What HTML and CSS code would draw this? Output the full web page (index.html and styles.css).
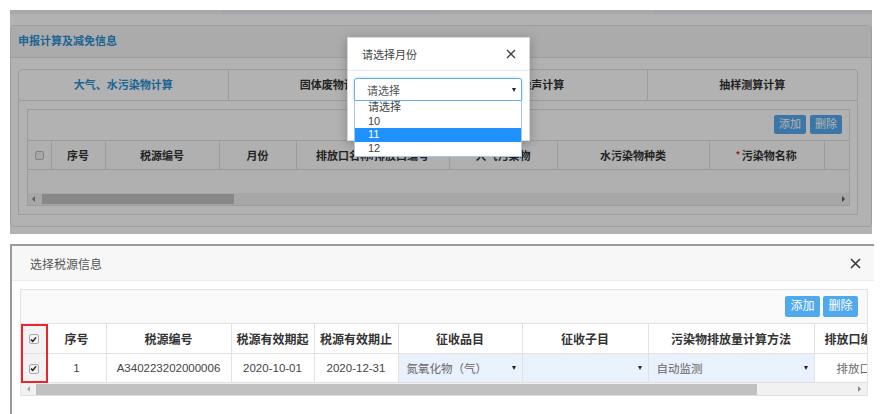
FILE: index.html
```html
<!DOCTYPE html>
<html lang="zh">
<head>
<meta charset="utf-8">
<title>税源</title>
<link rel="stylesheet" href="styles.css">
</head>
<body>
<div class="canvas">
  <div class="shot-top">
    <div class="nav"><span class="nt n1"></span><span class="nt n2"></span><span class="nt n3"></span><span class="nt n4"></span></div>
    <div class="panel">
      <div class="panel-head">申报计算及减免信息</div>
      <div class="panel-body">
        <div class="tabs">
          <div class="tab-heads">
            <div class="th active">大气、水污染物计算</div>
            <div class="th">固体废物计算</div>
            <div class="th">噪声计算</div>
            <div class="th">抽样测算计算</div>
          </div>
          <div class="tab-body">
            <div class="grid">
              <div class="toolbar"><span class="btn">添加</span><span class="btn">删除</span></div>
              <div class="tbl-wrap">
                <table class="t1">
                  <colgroup><col style="width:23px"><col style="width:54px"><col style="width:114px"><col style="width:77px"><col style="width:153px"><col style="width:108px"><col style="width:152px"><col style="width:115px"><col style="width:60px"></colgroup>
                  <tr>
                    <th><span class="cb-empty"></span></th>
                    <th>序号</th><th>税源编号</th><th>月份</th><th>排放口名称/排放口编号</th><th>大气污染物</th><th>水污染物种类</th><th class="req"><i>*</i>污染物名称</th><th></th>
                  </tr>
                </table>
                <div class="empty-row"></div>
              </div>
              <div class="hscroll">
                <span class="arr-l"></span><span class="thumb"></span><span class="arr-r"></span>
              </div>
            </div>
          </div>
        </div>
      </div>
    </div>
    <div class="mask"></div>
    <div class="modal">
      <div class="modal-head"><span>请选择月份</span>
        <svg class="x" width="10" height="10" viewBox="0 0 10 10"><path d="M1 1L9 9M9 1L1 9" stroke="#444" stroke-width="1.4" fill="none"/></svg>
      </div>
      <div class="modal-body">
        <div class="sel"><span>请选择</span><span class="caret"></span></div>
      </div>
    </div>
    <ul class="drop">
      <li>请选择</li>
      <li>10</li>
      <li class="hl">11</li>
      <li>12</li>
    </ul>
  </div>

  <div class="shot-bottom">
    <div class="dlg-head"><span class="dlg-title">选择税源信息</span>
      <svg class="x2" width="11" height="11" viewBox="0 0 11 11"><path d="M1 1L10 10M10 1L1 10" stroke="#333" stroke-width="1.5" fill="none"/></svg>
    </div>
    <div class="dlg-body">
      <div class="box">
        <div class="toolbar2"><span class="btn2">添加</span><span class="btn2">删除</span></div>
        <div class="tbl2-wrap">
          <table class="t2">
            <colgroup><col style="width:26px"><col style="width:59px"><col style="width:125px"><col style="width:83px"><col style="width:84px"><col style="width:124px"><col style="width:126px"><col style="width:166px"><col style="width:80px"></colgroup>
            <tr class="hd">
              <th class="c0"><span class="cb"><svg width="7" height="7" viewBox="0 0 7 7"><path d="M1 3.6L2.8 5.4L6 1.4" stroke="#222" stroke-width="1.5" fill="none"/></svg></span></th>
              <th>序号</th><th>税源编号</th><th>税源有效期起</th><th>税源有效期止</th><th>征收品目</th><th>征收子目</th><th>污染物排放量计算方法</th><th class="cut">排放口编号</th>
            </tr>
            <tr class="rw">
              <td class="c0"><span class="cb"><svg width="7" height="7" viewBox="0 0 7 7"><path d="M1 3.6L2.8 5.4L6 1.4" stroke="#222" stroke-width="1.5" fill="none"/></svg></span></td>
              <td>1</td><td>A340223202000006</td><td>2020-10-01</td><td>2020-12-31</td>
              <td class="s"><div class="sc"><span>氮氧化物（气）</span><span class="caret"></span></div></td>
              <td class="s"><div class="sc"><span></span><span class="caret"></span></div></td>
              <td class="s"><div class="sc"><span>自动监测</span><span class="caret"></span></div></td>
              <td class="cut2">排放口</td>
            </tr>
          </table>
          <div class="redmark"></div>
        </div>
        <div class="hscroll2">
          <span class="arr-l2"></span><span class="thumb2"></span><span class="arr-r2"></span>
        </div>
      </div>
    </div>
  </div>
</div>
</body>
</html>
```

FILE: styles.css
```css
* { box-sizing: border-box; margin: 0; padding: 0; }
html, body { width: 885px; height: 414px; overflow: hidden; background: #fff; }
body { font-family: "Liberation Sans", "Noto Sans CJK SC", sans-serif; color: #333; }

.canvas { display: flex; flex-direction: column; padding: 10px 0 0 10px; }

/* ---------- top screenshot ---------- */
.shot-top { position: relative; width: 862px; height: 224px; overflow: hidden; background: #fff; font-size: 11px; }
.nav { display: flex; height: 4px; }
.nt { height: 4px; }
.n1 { width: 212px; background: #f2f2f2; }
.n2 { width: 217px; background: #eaeef5; }
.n3 { width: 215px; background: #f2f2f2; }
.n4 { width: 218px; background: #eaeef5; }

.panel { margin-top: 11px; width: 862px; height: 202px; border: 1px solid #e2e2e2; border-radius: 4px; background: #fff; }
.panel-head { height: 32px; line-height: 31px; padding-left: 7px; background: #f5f5f5; border-bottom: 1px solid #e2e2e2; color: #2a8fd4; font-weight: bold; font-size: 11px; border-radius: 4px 4px 0 0; }
.panel-body { padding: 11px 12px 0 7px; }
.tabs { width: 840px; height: 146px; border: 1px solid #e0e0e0; border-radius: 4px 4px 0 0; }
.tab-heads { display: flex; height: 31px; border-bottom: 1px solid #e0e0e0; }
.th { width: 210px; text-align: center; line-height: 30px; font-weight: bold; color: #333; border-right: 1px solid #e0e0e0; }
.th:last-child { border-right: none; }
.th.active { color: #2a8fd4; }
.tab-body { padding: 8px 7px 0 8px; }
.grid { width: 823px; height: 97px; border: 1px solid #e0e0e0; display: flex; flex-direction: column; }
.toolbar { height: 30px; display: flex; justify-content: flex-end; gap: 4px; padding: 5px 7px 0 0; }
.btn { width: 32px; height: 19px; background: #55aaf0; color: #fff; font-size: 11px; line-height: 19px; text-align: center; border-radius: 2px; }
.tbl-wrap { width: 821px; overflow: hidden; }
.t1 { border-collapse: collapse; table-layout: fixed; width: 856px; }
.t1 th { height: 29px; border: 1px solid #e0e0e0; border-left: none; font-weight: bold; color: #333; background: #fcfcfc; white-space: nowrap; overflow: hidden; text-align: center; }
.t1 th:first-child { border-left: none; }
.t1 th.req i { color: #e02020; font-style: normal; margin-right: 2px; vertical-align: 3px; font-size: 9px; }
.cb-empty { display: inline-block; width: 9px; height: 9px; border: 1px solid #bbb; border-radius: 2px; background: #f0f0f0; vertical-align: middle; }
.empty-row { height: 24px; background: #fcfcfc; }
.hscroll { height: 12px; background: #f0f0f0; display: flex; align-items: center; position: relative; }
.arr-l { width: 0; height: 0; border-right: 3px solid #888; border-top: 3px solid transparent; border-bottom: 3px solid transparent; margin: 0 7px 0 4px; }
.thumb { width: 192px; height: 10px; background: #c3c3c3; }
.arr-r { width: 0; height: 0; border-left: 3px solid #555; border-top: 3px solid transparent; border-bottom: 3px solid transparent; margin-left: auto; margin-right: 4px; }

.mask { position: absolute; inset: 0; background: rgba(0, 0, 0, 0.3); }

.modal { position: absolute; left: 337px; top: 27px; width: 183px; height: 104px; background: #fff; border: 1px solid #d8d8d8; box-shadow: 0 3px 10px rgba(0,0,0,0.25); }
.modal-head { height: 33px; border-bottom: 1px solid #e8e8e8; display: flex; align-items: center; justify-content: space-between; padding: 0 13px 0 14px; font-size: 11px; color: #444; }
.modal-body { padding: 7px 7px 0 6px; }
.sel { height: 23px; border: 1px solid #66afe9; border-radius: 3px 3px 0 0; box-shadow: 0 0 3px rgba(102,175,233,0.6); display: flex; align-items: center; justify-content: space-between; padding: 0 5px 0 12px; color: #555; font-size: 11px; }
.caret { width: 0; height: 0; border-top: 4px solid #222; border-left: 2.5px solid transparent; border-right: 2.5px solid transparent; }

.drop { position: absolute; left: 344px; top: 91px; width: 168px; height: 56px; list-style: none; background: #fff; border: 1px solid #a9c4e8; border-top: none; font-size: 11px; color: #444; }
.drop li { height: 13.7px; line-height: 13.7px; padding-left: 13px; }
.drop li.hl { background: #1e90ff; color: #fff; }

/* ---------- bottom screenshot ---------- */
.shot-bottom { margin-top: 10px; width: 864px; height: 170px; border-top: 2px solid #9a9a9a; border-left: 2px solid #9a9a9a; background: #fff; }
.dlg-head { height: 35px; background: #f7f7f7; border-bottom: 1px solid #ececec; display: flex; align-items: center; justify-content: space-between; padding: 0 13px 0 18px; }
.dlg-title { font-size: 12px; color: #555; }
.dlg-body { padding: 8px 6px 0 8px; }
.box { width: 848px; border: 1px solid #e2e2e2; }
.toolbar2 { height: 33px; background: #f9f9f9; display: flex; justify-content: flex-end; gap: 3px; padding: 6px 9px 0 0; }
.btn2 { width: 35px; height: 21px; background: #4fa9ec; color: #fff; font-size: 12px; line-height: 21px; text-align: center; border-radius: 2px; }
.tbl2-wrap { position: relative; width: 846px; overflow: hidden; }
.t2 { border-collapse: collapse; table-layout: fixed; width: 873px; font-size: 11.5px; }
.t2 th, .t2 td { border: 1px solid #e2e2e2; text-align: center; white-space: nowrap; overflow: hidden; }
.t2 tr > :first-child { border-left: none; }
.t2 th { height: 30px; font-weight: bold; color: #333; background: #fff; font-size: 12px; }
.t2 td { height: 29px; color: #444; background: #fff; }
.t2 .c0 { background: #f3f3f3; }
.t2 td.s { background: #e8f1fc; text-align: left; padding: 0 6px 0 8px; color: #666; }
.sc { display: flex; align-items: center; justify-content: space-between; }
.t2 th.cut { text-align: left; padding-left: 10px; }
.t2 td.cut2 { text-align: left; padding-left: 22px; color: #666; }
.cb { display: inline-flex; align-items: center; justify-content: center; width: 10px; height: 10px; border: 1px solid #aaa; border-radius: 2px; background: #f2f2f2; vertical-align: middle; }
.redmark { position: absolute; left: 0; top: 1px; width: 27px; height: 59px; border: 2px solid #e8262c; }
.hscroll2 { height: 12px; background: #f1f1f1; display: flex; align-items: center; }
.arr-l2 { width: 0; height: 0; border-right: 3px solid #aaa; border-top: 3px solid transparent; border-bottom: 3px solid transparent; margin: 0 6px 0 6px; }
.thumb2 { width: 721px; height: 11px; background: #c1c1c1; }
.arr-r2 { width: 0; height: 0; border-left: 3px solid #888; border-top: 3px solid transparent; border-bottom: 3px solid transparent; margin-left: auto; margin-right: 6px; }
```
